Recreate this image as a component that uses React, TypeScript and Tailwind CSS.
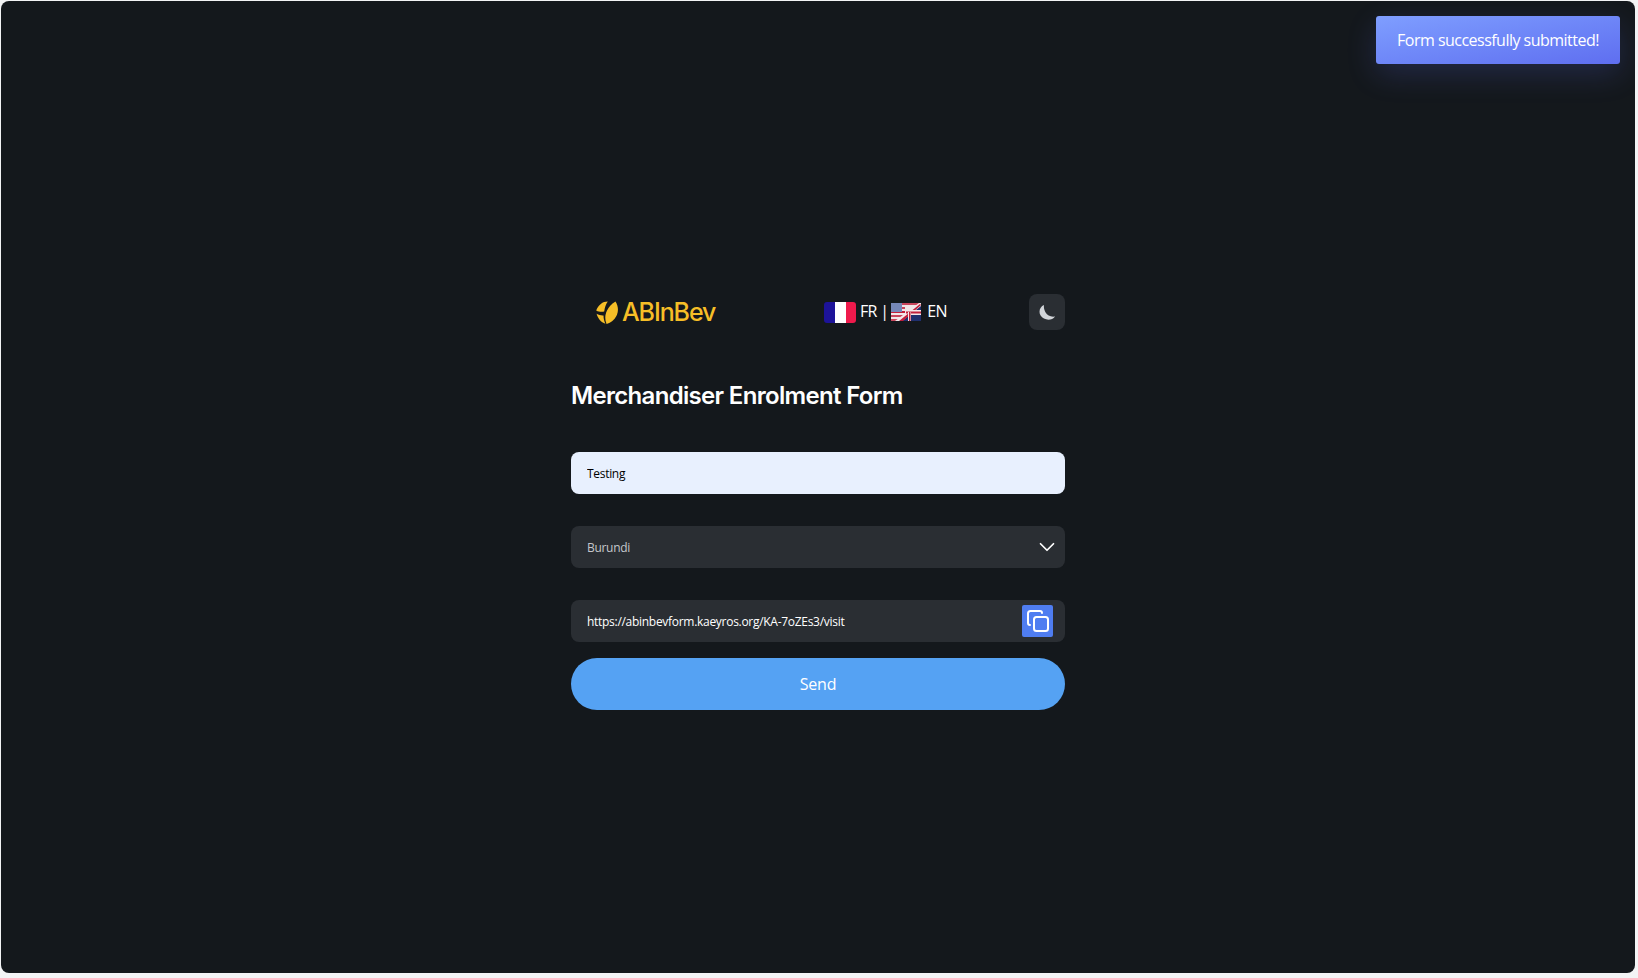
import { FiChevronDown } from "react-icons/fi";

function Logo() {
    return (
        <div className="flex items-center gap-[4px] text-[#f6be27]">
            <svg width="22" height="23" viewBox="0 0 22 23" fill="currentColor">
                <path d="M19.5 0.5C22.5 5 22.6 10.5 20.4 15C18.4 19 15 21.8 10.6 23C8.6 18.5 9 13.5 11 9.5C13 5.5 16 2.5 19.5 0.5Z" />
                <path d="M11.8 0.4C6.5 0.4 2.4 3.8 0.2 9.4C3 11 6 11.2 8.2 10.4C8.6 6.5 10 3 11.8 0.4Z" />
                <path d="M0.6 12.8C1.8 17.6 5 21.2 9.4 22.8C8.2 20 7.5 17.4 7.5 14.4C5.2 14.6 2.8 14 0.6 12.8Z" />
            </svg>
            <span className="font-['Inter',sans-serif] text-[25px] leading-none font-medium tracking-[-1.1px]">ABInBev</span>
        </div>
    );
}

function FrFlag() {
    return (
        <svg width="32" height="21" viewBox="0 0 32 21" className="rounded-[3px]">
            <rect width="11" height="21" fill="#1d1399" />
            <rect x="11" width="11" height="21" fill="#ffffff" />
            <rect x="22" width="10" height="21" fill="#ef1a4c" />
        </svg>
    );
}

function EnFlag() {
    return (
        <svg width="30" height="18" viewBox="0 0 30 18" className="blur-[0.3px]">
            <rect width="30" height="18" fill="#f1e6e8" />
            <rect width="30" height="2" y="0" fill="#c9455c" />
            <rect width="14" height="2" y="4" fill="#c9455c" />
            <rect width="14" height="2" y="8" fill="#c21f3b" />
            <rect width="12" height="2" y="12" fill="#c9455c" />
            <rect width="8" height="2" y="16" fill="#c9455c" />
            <rect width="11" height="9" fill="#7688b8" />
            <path d="M30 0L30 18L8 18L22 8Z" fill="#1f2f6e" />
            <path d="M4 18L28 0L30 0L30 3L11 18Z" fill="#f4e8ea" />
            <path d="M8 18L29 1L30 2L12 18Z" fill="#c21f3b" />
            <rect x="17" y="7" width="13" height="5" fill="#f4e8ea" />
            <rect x="15" y="8.5" width="15" height="2" fill="#c21f3b" />
            <rect x="17" y="9" width="3" height="9" fill="#f4e8ea" />
            <rect x="18" y="9" width="1.5" height="9" fill="#c21f3b" />
        </svg>
    );
}

function MoonIcon() {
    return (
        <svg width="16" height="15" viewBox="0 0 16 15" fill="#d2d5da">
            <path d="M5 0C1 1.5 -0.8 6.5 1.6 10.6C4.4 15.4 12.6 16.4 16 11.6C11.8 12.2 8.4 10.8 6.6 7.6C5.2 5 4.6 2.5 5 0Z" />
        </svg>
    );
}

function CopyIcon() {
    return (
        <svg width="24" height="24" viewBox="0 0 24 24" fill="none" stroke="white" strokeWidth="2" strokeLinejoin="round" strokeLinecap="round">
            <rect x="8" y="8" width="14" height="14" rx="2.5" />
            <path d="M4 16C2.9 16 2 15.1 2 14V4.5C2 3.1 3.1 2 4.5 2H14C15.1 2 16 2.9 16 4" />
        </svg>
    );
}

export default function App() {
    return (
        <div className="h-screen bg-[#f3f4f5] pt-px pr-[3px] pb-[5px] pl-px font-['Open_Sans',sans-serif]">
            <div className="relative h-full rounded-[8px] bg-[#14181c] pt-[293px]">
                <div className="absolute top-[15px] right-[15px] flex h-[48px] w-[244px] items-center justify-center rounded-[3px] bg-linear-to-br from-[#7f9eff] to-[#5f6ef0] text-[16px] tracking-[-0.52px] text-white shadow-[0_10px_30px_rgba(95,110,240,0.2)]">
                    Form successfully submitted!
                </div>

                <div className="mx-auto flex w-[494px] flex-col">
                    <div className="flex h-[36px] items-center">
                        <div className="ml-[25px] w-[228px]">
                            <Logo />
                        </div>
                        <div className="flex items-center text-[16px] tracking-[-0.7px] text-white">
                            <FrFlag />
                            <span className="ml-[4px] pb-[3px]">FR |</span>
                            <span className="ml-[3px]"><EnFlag /></span>
                            <span className="ml-[6px] pb-[3px]">EN</span>
                        </div>
                        <button className="ml-auto flex h-[36px] w-[36px] items-center justify-center rounded-[8px] bg-[#2a2e33]">
                            <MoonIcon />
                        </button>
                    </div>

                    <h1 className="mt-[48px] font-['Inter',sans-serif] text-[24px] leading-[36px] font-semibold tracking-[-0.68px] text-white">
                        Merchandiser Enrolment Form
                    </h1>

                    <input
                        readOnly
                        value="Testing"
                        className="mt-[38px] h-[42px] rounded-[8px] bg-[#e8f0fe] px-4 text-[12px] tracking-[-0.3px] text-black outline-none"
                    />

                    <div className="relative mt-[32px]">
                        <select className="h-[42px] w-full appearance-none rounded-[8px] bg-[#2a2e33] px-4 pt-[2px] text-[12px] tracking-[-0.3px] text-[#c4c7cb] outline-none">
                            <option>Burundi</option>
                        </select>
                        <FiChevronDown className="pointer-events-none absolute top-[8px] right-[5px] text-white" size={26} strokeWidth={1.6} />
                    </div>

                    <div className="mt-[32px] flex h-[42px] items-center justify-between rounded-[8px] bg-[#2a2e33] pr-[12px] pl-4">
                        <span className="pt-[2px] text-[12px] tracking-[-0.29px] text-white">https://abinbevform.kaeyros.org/KA-7oZEs3/visit</span>
                        <button className="flex h-[32px] w-[31px] items-center justify-center rounded-[2px] bg-[#4f7df1]">
                            <CopyIcon />
                        </button>
                    </div>

                    <button className="mt-[16px] h-[52px] rounded-full bg-[#55a2f3] text-[16px] tracking-[-0.2px] text-white">
                        Send
                    </button>
                </div>
            </div>
        </div>
    );
}
